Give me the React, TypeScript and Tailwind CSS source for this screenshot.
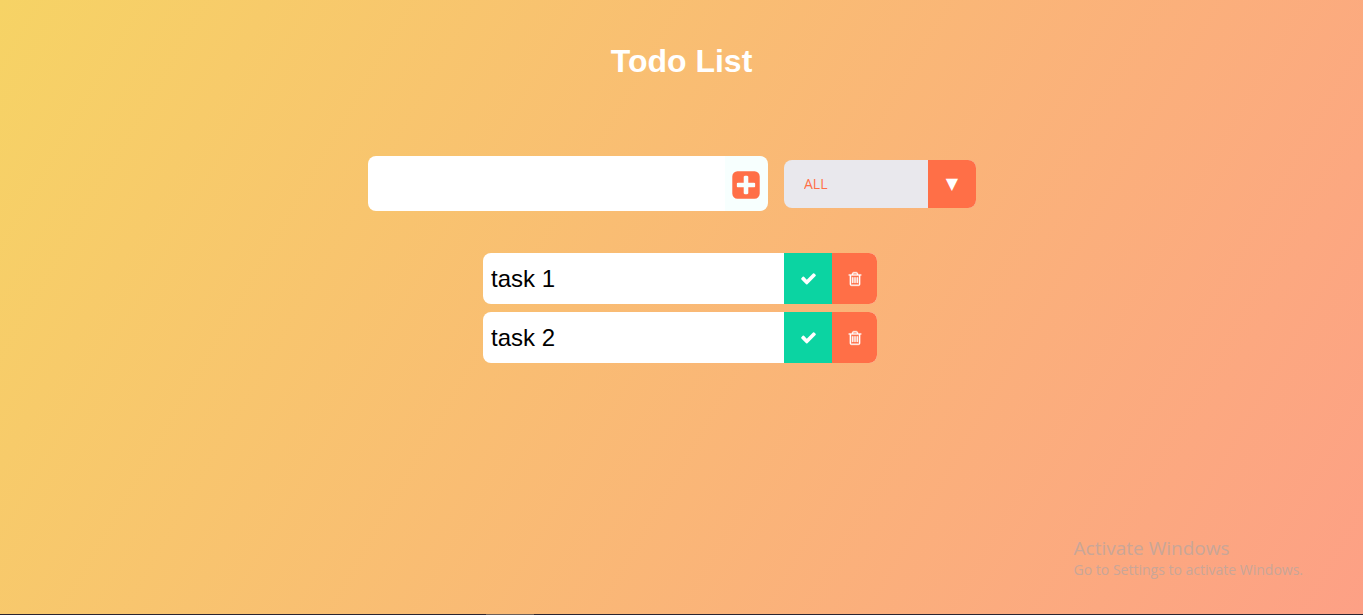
import { useState } from 'react';
import type { FormEvent } from 'react';

type Todo = { id: number; text: string; done: boolean };

const PLUS_SQUARE =
  'M1408 960v-128q0-26-19-45t-45-19h-320v-320q0-26-19-45t-45-19h-128q-26 0-45 19t-19 45v320h-320q-26 0-45 19t-19 45v128q0 26 19 45t45 19h320v320q0 26 19 45t45 19h128q26 0 45-19t19-45v-320h320q26 0 45-19t19-45zm256-544v960q0 119-84.5 203.5t-203.5 84.5h-960q-119 0-203.5-84.5t-84.5-203.5v-960q0-119 84.5-203.5t203.5-84.5h960q119 0 203.5 84.5t84.5 203.5z';
const CHECK =
  'M1671 566q0 40-28 68l-724 724-136 136q-28 28-68 28t-68-28l-136-136-362-362q-28-28-28-68t28-68l136-136q28-28 68-28t68 28l294 295 656-657q28-28 68-28t68 28l136 136q28 28 28 68z';
const TRASH =
  'M704 736v576q0 14-9 23t-23 9h-64q-14 0-23-9t-9-23v-576q0-14 9-23t23-9h64q14 0 23 9t9 23zm256 0v576q0 14-9 23t-23 9h-64q-14 0-23-9t-9-23v-576q0-14 9-23t23-9h64q14 0 23 9t9 23zm256 0v576q0 14-9 23t-23 9h-64q-14 0-23-9t-9-23v-576q0-14 9-23t23-9h64q14 0 23 9t9 23zm128 724v-948h-896v948q0 22 7 40.5t14.5 27 10.5 8.5h832q3 0 10.5-8.5t14.5-27 7-40.5zm-672-1076h448l-48-117q-7-9-17-11h-317q-10 2-17 11zm928 32v64q0 14-9 23t-23 9h-96v948q0 83-47 143.5t-113 60.5h-832q-66 0-113-58.5t-47-141.5v-952h-96q-14 0-23-9t-9-23v-64q0-14 9-23t23-9h309l70-167q15-37 54-63t79-26h320q40 0 79 26t54 63l70 167h309q14 0 23 9t9 23z';

function Icon({ path, className }: { path: string; className: string }) {
  return (
    <svg viewBox="0 0 1792 1792" fill="currentColor" aria-hidden="true" className={className}>
      <path d={path} />
    </svg>
  );
}

export default function App() {
  const [text, setText] = useState('');
  const [filter, setFilter] = useState('all');
  const [todos, setTodos] = useState<Todo[]>([
    { id: 1, text: 'task 1', done: false },
    { id: 2, text: 'task 2', done: false },
  ]);

  const addTodo = (event: FormEvent) => {
    event.preventDefault();
    if (!text.trim()) return;
    setTodos([...todos, { id: Date.now(), text: text.trim(), done: false }]);
    setText('');
  };

  const visible = todos.filter((t) => filter === 'all' || (filter === 'completed') === t.done);

  return (
    <div className="flex min-h-screen flex-col bg-[linear-gradient(120deg,#f6d365,#fda085)] font-['Liberation_Sans',Arial,sans-serif]">
      <header className="flex h-[122px] items-center justify-center">
        <h1 className="text-[32px] leading-9 font-bold text-white">Todo List</h1>
      </header>

      <main className="flex flex-1 flex-col pt-[34px]">
        <form onSubmit={addTodo} className="flex items-center justify-center">
          <div className="flex h-[55px] w-[400px] overflow-hidden rounded-lg">
            <input
              type="text"
              aria-label="New task"
              value={text}
              onChange={(e) => setText(e.target.value)}
              className="min-w-0 flex-1 bg-white px-2 text-2xl text-black outline-none"
            />
            <button
              type="submit"
              aria-label="Add task"
              className="flex w-[43px] items-center justify-center bg-[#f7fffe] pt-0.5 pr-px text-[#ff6f47]"
            >
              <Icon path={PLUS_SQUARE} className="size-8" />
            </button>
          </div>
          <div className="relative mr-[19px] ml-4 h-12 w-48 overflow-hidden rounded-lg">
            <select
              aria-label="Filter tasks"
              value={filter}
              onChange={(e) => setFilter(e.target.value)}
              className="size-full appearance-none bg-[#e9e8ed] pr-14 pl-5 font-['Open_Sans',sans-serif] text-sm text-[#ff6f47] outline-none"
            >
              <option value="all">ALL</option>
              <option value="completed">Completed</option>
              <option value="uncompleted">Uncompleted</option>
            </select>
            <span
              aria-hidden="true"
              className="pointer-events-none absolute inset-y-0 right-0 flex w-12 items-center justify-center bg-[#ff6f47] font-['DejaVu_Sans',sans-serif] text-base text-white"
            >
              ▼
            </span>
          </div>
        </form>

        <ul className="flex flex-col items-center gap-2 pt-[42px] pr-[3px]">
          {visible.map((todo) => (
            <li key={todo.id} className="flex h-[51px] w-[394px] overflow-hidden rounded-lg bg-white">
              <span className={`flex flex-1 items-center px-2 text-2xl text-black ${todo.done ? 'line-through opacity-50' : ''}`}>
                {todo.text}
              </span>
              <button
                type="button"
                aria-label={`Complete ${todo.text}`}
                onClick={() => setTodos(todos.map((t) => (t.id === todo.id ? { ...t, done: !t.done } : t)))}
                className="flex w-12 items-center justify-center bg-[#0bd4a2] pl-px text-white"
              >
                <Icon path={CHECK} className="size-[17px]" />
              </button>
              <button
                type="button"
                aria-label={`Delete ${todo.text}`}
                onClick={() => setTodos(todos.filter((t) => t.id !== todo.id))}
                className="flex w-[45px] items-center justify-center bg-[#ff6f47] text-white"
              >
                <Icon path={TRASH} className="size-4 stroke-current stroke-[40]" />
              </button>
            </li>
          ))}
        </ul>
      </main>

      <footer className="flex flex-col">
        <div className="self-end pr-15 pb-[34px] font-['Open_Sans',sans-serif] text-[#c9a698]">
          <p className="text-[19px] leading-6">Activate Windows</p>
          <p className="text-sm leading-5">Go to Settings to activate Windows.</p>
        </div>
        <div className="flex h-px bg-[#2a2430]">
          <div className="ml-[486px] h-px w-12 bg-[#6d5f58]" />
        </div>
      </footer>
    </div>
  );
}
